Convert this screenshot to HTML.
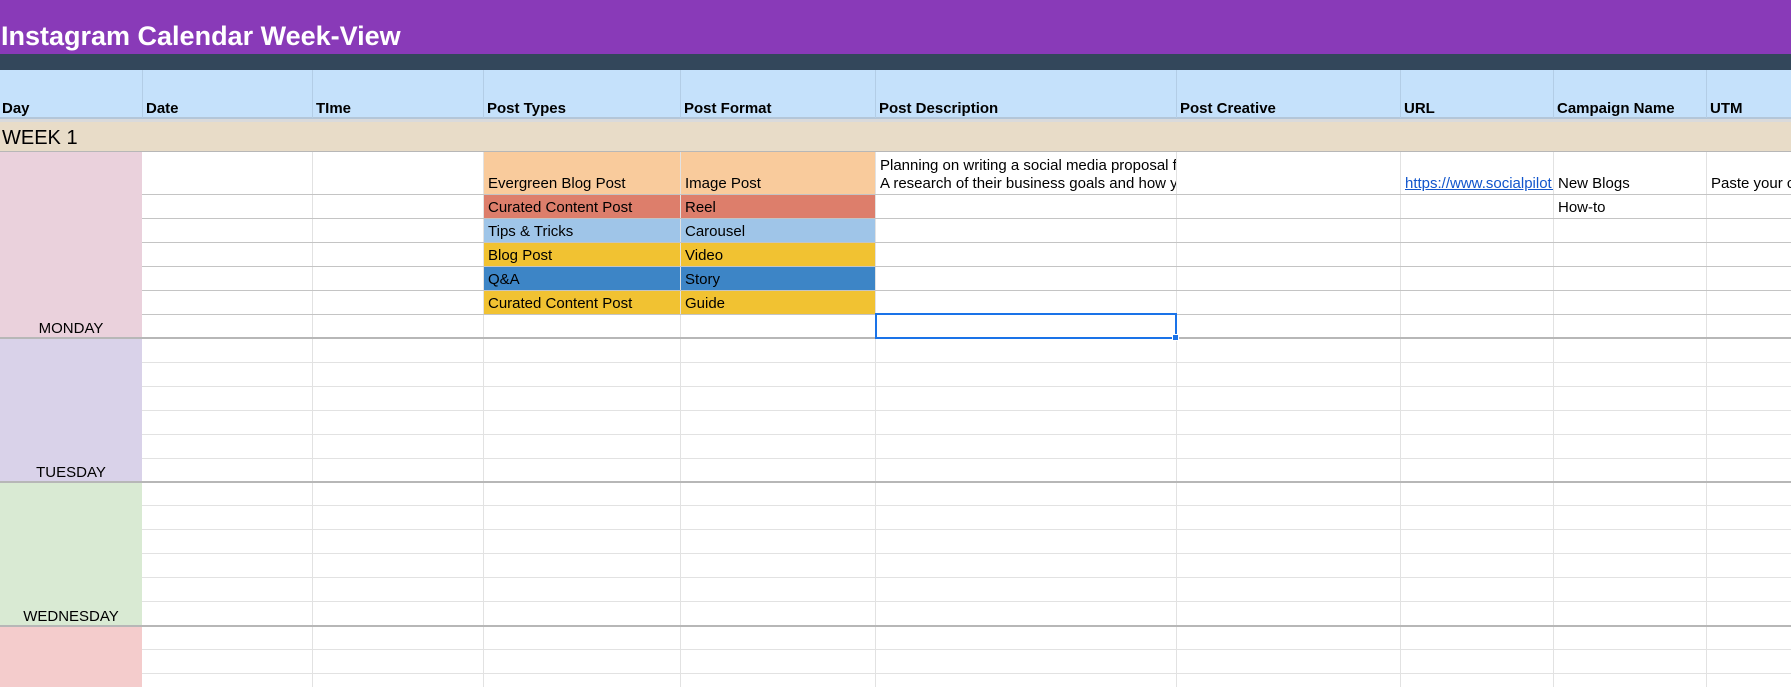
<!DOCTYPE html>
<html><head><meta charset="utf-8"><style>
*{margin:0;padding:0;box-sizing:border-box}
body{width:1791px;height:687px;overflow:hidden;background:#fff;position:relative;font-family:"Liberation Sans",Arial,sans-serif;color:#000}
.a{position:absolute}
.c{position:absolute;font-size:15px;padding:0 4px 2px;display:flex;align-items:flex-end;white-space:nowrap;overflow:hidden;line-height:17px}
.h{font-weight:bold;font-size:15px;padding-bottom:1px}
.vl{position:absolute;width:1px;background:#e2e2e2;top:152px;height:535px}
.hl{position:absolute;height:1px;left:142px;width:1649px;background:#e2e2e2}
.ds{position:absolute;height:2px;left:0;width:1791px;background:#b7b7b7}
.day{position:absolute;left:0;width:142px;font-size:15px;text-align:center;display:flex;align-items:flex-end;justify-content:center;padding-bottom:0px;line-height:17px}
</style></head><body>
<div class="a" style="left:0;top:0;width:1791px;height:54px;background:#893ab8"></div>
<div class="a" style="left:1px;top:20px;color:#fff;font-weight:bold;font-size:27px;line-height:32px">Instagram Calendar Week-View</div>
<div class="a" style="left:0;top:54px;width:1791px;height:16px;background:#33475b"></div>
<div class="a" style="left:0;top:70px;width:1791px;height:48px;background:#c5e1fb"></div>
<div class="a" style="left:0;top:117px;width:1791px;height:5px;background:#d9dadc;border-top:2px solid #b4c6d8"></div>
<div class="a" style="left:142px;top:70px;width:1px;height:48px;background:#b3cde6"></div>
<div class="a" style="left:312px;top:70px;width:1px;height:48px;background:#b3cde6"></div>
<div class="a" style="left:483px;top:70px;width:1px;height:48px;background:#b3cde6"></div>
<div class="a" style="left:680px;top:70px;width:1px;height:48px;background:#b3cde6"></div>
<div class="a" style="left:875px;top:70px;width:1px;height:48px;background:#b3cde6"></div>
<div class="a" style="left:1176px;top:70px;width:1px;height:48px;background:#b3cde6"></div>
<div class="a" style="left:1400px;top:70px;width:1px;height:48px;background:#b3cde6"></div>
<div class="a" style="left:1553px;top:70px;width:1px;height:48px;background:#b3cde6"></div>
<div class="a" style="left:1706px;top:70px;width:1px;height:48px;background:#b3cde6"></div>
<div class="c h" style="left:-2px;top:70px;width:142px;height:48px">Day</div>
<div class="c h" style="left:142px;top:70px;width:170px;height:48px">Date</div>
<div class="c h" style="left:312px;top:70px;width:171px;height:48px">TIme</div>
<div class="c h" style="left:483px;top:70px;width:197px;height:48px">Post Types</div>
<div class="c h" style="left:680px;top:70px;width:195px;height:48px">Post Format</div>
<div class="c h" style="left:875px;top:70px;width:301px;height:48px">Post Description</div>
<div class="c h" style="left:1176px;top:70px;width:224px;height:48px">Post Creative</div>
<div class="c h" style="left:1400px;top:70px;width:153px;height:48px">URL</div>
<div class="c h" style="left:1553px;top:70px;width:153px;height:48px">Campaign Name</div>
<div class="c h" style="left:1706px;top:70px;width:85px;height:48px">UTM</div>
<div class="a" style="left:0;top:122px;width:1791px;height:30px;background:#e8dcc8;border-bottom:1px solid #b7b7b7"></div>
<div class="a" style="left:2px;top:126px;font-size:20px;line-height:24px">WEEK 1</div>
<div class="vl" style="left:312px"></div><div class="vl" style="left:483px"></div><div class="vl" style="left:680px"></div><div class="vl" style="left:875px"></div><div class="vl" style="left:1176px"></div><div class="vl" style="left:1400px"></div><div class="vl" style="left:1553px"></div><div class="vl" style="left:1706px"></div>
<div class="hl" style="top:194px;background:#c4c4c4"></div>
<div class="hl" style="top:218px;background:#c4c4c4"></div>
<div class="hl" style="top:242px;background:#c4c4c4"></div>
<div class="hl" style="top:266px;background:#c4c4c4"></div>
<div class="hl" style="top:290px;background:#c4c4c4"></div>
<div class="hl" style="top:314px;background:#c4c4c4"></div>
<div class="hl" style="top:362px"></div><div class="hl" style="top:386px"></div><div class="hl" style="top:410px"></div><div class="hl" style="top:434px"></div><div class="hl" style="top:458px"></div>
<div class="hl" style="top:505px"></div><div class="hl" style="top:529px"></div><div class="hl" style="top:553px"></div><div class="hl" style="top:577px"></div><div class="hl" style="top:601px"></div>
<div class="hl" style="top:649px"></div><div class="hl" style="top:673px"></div>
<div class="ds" style="top:337px"></div><div class="ds" style="top:481px"></div><div class="ds" style="top:625px"></div>
<div class="day" style="top:152px;height:185px;background:#ead1dc">MONDAY</div>
<div class="day" style="top:339px;height:142px;background:#d9d2e9">TUESDAY</div>
<div class="day" style="top:483px;height:142px;background:#d9ead3">WEDNESDAY</div>
<div class="day" style="top:627px;height:60px;background:#f4cccc"></div>
<div class="c" style="left:484px;top:152px;width:196px;height:42px;background:#f9cb9c">Evergreen Blog Post</div>
<div class="c" style="left:681px;top:152px;width:194px;height:42px;background:#f9cb9c">Image Post</div>
<div class="c" style="left:484px;top:195px;width:196px;height:23px;background:#dd7e6b">Curated Content Post</div>
<div class="c" style="left:681px;top:195px;width:194px;height:23px;background:#dd7e6b">Reel</div>
<div class="c" style="left:484px;top:219px;width:196px;height:23px;background:#9fc5e8">Tips &amp; Tricks</div>
<div class="c" style="left:681px;top:219px;width:194px;height:23px;background:#9fc5e8">Carousel</div>
<div class="c" style="left:484px;top:243px;width:196px;height:23px;background:#f1c232">Blog Post</div>
<div class="c" style="left:681px;top:243px;width:194px;height:23px;background:#f1c232">Video</div>
<div class="c" style="left:484px;top:267px;width:196px;height:23px;background:#3d85c6">Q&amp;A</div>
<div class="c" style="left:681px;top:267px;width:194px;height:23px;background:#3d85c6">Story</div>
<div class="c" style="left:484px;top:291px;width:196px;height:23px;background:#f1c232">Curated Content Post</div>
<div class="c" style="left:681px;top:291px;width:194px;height:23px;background:#f1c232">Guide</div>
<div class="c" style="left:876px;top:152px;width:300px;height:42px;display:block;padding-top:5px;line-height:18px;background:#fff">Planning on writing a social media proposal for<br>A research of their business goals and how you</div>
<div class="c" style="left:1401px;top:152px;width:152px;height:42px;color:#1155cc;text-decoration:underline;background:#fff">https://www.socialpilot.co</div>
<div class="c" style="left:1554px;top:152px;width:152px;height:42px">New Blogs</div>
<div class="c" style="left:1707px;top:152px;width:84px;height:42px">Paste your custom</div>
<div class="c" style="left:1554px;top:195px;width:152px;height:23px">How-to</div>
<div class="a" style="left:875px;top:313px;width:302px;height:26px;border:2px solid #1a73e8"></div>
<div class="a" style="left:1172px;top:334px;width:7px;height:7px;background:#1a73e8;border:1px solid #fff"></div>
</body></html>
